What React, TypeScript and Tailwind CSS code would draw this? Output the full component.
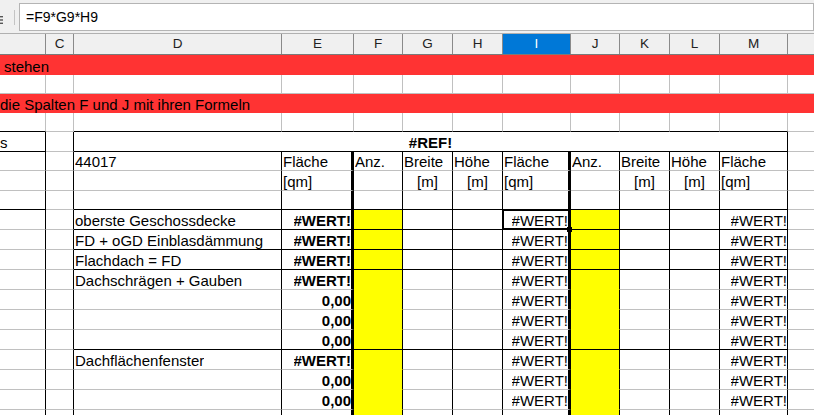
import React from "react";

type Line = "g" | "b" | "t" | "y" | "n";
type Cell = {
  t?: string;
  a?: "l" | "r" | "c";
  bold?: boolean;
  r?: Line;
  bt?: Line;
  yellow?: boolean;
  sel?: boolean;
};

// column widths B..N (B and N are cut by the window)
const W = [
  "w-[46px]",
  "w-[28px]",
  "w-[208px]",
  "w-[72px]",
  "w-[49px]",
  "w-[50px]",
  "w-[50px]",
  "w-[68px]",
  "w-[49px]",
  "w-[50px]",
  "w-[50px]",
  "w-[68px]",
  "w-[60px]",
];
const LETTERS = ["", "C", "D", "E", "F", "G", "H", "I", "J", "K", "L", "M", ""];

const RB: Record<Line, string> = {
  g: "border-r border-r-[#c0c0c0]",
  b: "border-r border-r-black",
  t: "border-r-[3px] border-r-black",
  y: "border-r border-r-[#ffff00]",
  n: "",
};
const BB: Record<Line, string> = {
  g: "border-b border-b-[#c0c0c0]",
  b: "border-b border-b-black",
  t: "border-b-2 border-b-black",
  y: "border-b border-b-[#ffff00]",
  n: "",
};
const AL = { l: "justify-start pl-[1px]", r: "justify-end", c: "justify-center" };

function Row({ h, cells }: { h: string; cells: Cell[] }) {
  return (
    <div className={`flex shrink-0 ${h}`}>
      {cells.map((c, i) => (
        <div
          key={i}
          className={`relative flex shrink-0 items-end h-full ${W[i]} ${RB[c.r ?? "g"]} ${BB[c.bt ?? "g"]} ${
            c.yellow ? "bg-[#ffff00]" : "bg-white"
          } ${AL[c.a ?? "l"]}`}
        >
          <span
            className={`overflow-hidden whitespace-nowrap leading-[16px] ${c.bold ? "font-bold" : ""}`}
          >
            {c.t}
          </span>
          {c.sel && (
            <>
              <div className="absolute left-[-1px] top-[-1px] w-[69px] h-[21px] border-2 border-black z-10" />
              <div className="absolute left-[64px] top-[17px] w-[5px] h-[5px] bg-black z-10" />
            </>
          )}
        </div>
      ))}
    </div>
  );
}

function plain(bottoms?: Partial<Record<number, Line>>): Cell[] {
  return W.map((_, i) => ({ bt: bottoms?.[i] ?? "g" }));
}

function tableRow(texts: Record<number, Cell>, bottom: Line, bBottom: Line = "g"): Cell[] {
  const rights: Line[] = ["b", "b", "b", "t", "b", "b", "b", "t", "b", "b", "b", "b", "g"];
  return W.map((_, i) => {
    const inBox = i >= 2 && i <= 11;
    return {
      r: rights[i],
      bt: i === 0 ? bBottom : inBox ? bottom : "g",
      ...texts[i],
    };
  });
}

const data: { d?: string; e?: string; bt: Line; sel?: boolean; last?: boolean }[] = [
  { d: "oberste Geschossdecke", e: "#WERT!", bt: "b", sel: true },
  { d: "FD + oGD Einblasdämmung", e: "#WERT!", bt: "b" },
  { d: "Flachdach = FD", e: "#WERT!", bt: "b" },
  { d: "Dachschrägen + Gauben", e: "#WERT!", bt: "g" },
  { e: "0,00", bt: "g" },
  { e: "0,00", bt: "g" },
  { e: "0,00", bt: "b" },
  { d: "Dachflächenfenster", e: "#WERT!", bt: "g" },
  { e: "0,00", bt: "g" },
  { e: "0,00", bt: "g" },
  { bt: "g", last: true },
];

export default function App() {
  const boxBottoms = { 0: "b", 2: "b", 3: "b", 4: "b", 5: "b", 6: "b", 7: "b", 8: "b", 9: "b", 10: "b", 11: "b" } as Partial<
    Record<number, Line>
  >;

  return (
    <div className="w-[814px] h-[415px] overflow-hidden bg-white text-[15px] text-black font-['Liberation_Sans',Arial,sans-serif] flex flex-col">
      {/* formula bar */}
      <div className="flex shrink-0 h-[33px] bg-[#f0f0f0] pt-[3px]">
        <div className="w-[14px] pt-[13px]">
          <svg width="4" height="8" viewBox="0 0 4 8">
            <rect x="0" y="0" width="3" height="1.4" fill="#555" />
            <rect x="0" y="3.3" width="3" height="1.4" fill="#555" />
            <rect x="0" y="6.6" width="3" height="1.4" fill="#555" />
          </svg>
        </div>
        <div className="w-px h-[15px] mt-[7px] bg-[#c4c4c4]" />
        <div className="ml-[4px] flex-1 h-[28px] border border-[#b4b4b4] bg-white flex items-center pl-[6px] text-[14px]">
          =F9*G9*H9
        </div>
      </div>

      {/* column header */}
      <div className="flex shrink-0 h-[22px] border-t border-t-[#b0b0b0] border-b border-b-[#7a7a7a] bg-[#f0f0f0]">
        {LETTERS.map((l, i) => (
          <div
            key={i}
            className={`shrink-0 h-full flex items-center justify-center text-[13.5px] ${W[i]} ${
              i < 12 ? "border-r border-r-[#8a8a8a]" : ""
            } ${l === "I" ? "bg-[#0078d7] text-white" : "text-[#222]"}`}
          >
            {l}
          </div>
        ))}
      </div>

      {/* row 1 */}
      <div className="flex shrink-0 h-[20px] bg-[#ff3333] items-end pl-[4px]">
        <span className="leading-[16px] whitespace-nowrap">stehen</span>
      </div>
      <Row h="h-[19px]" cells={plain()} />
      {/* row 3 */}
      <div className="flex shrink-0 h-[19px] bg-[#ff3333] items-end">
        <span className="leading-[16px] whitespace-nowrap">die Spalten F und J mit ihren Formeln</span>
      </div>
      <Row h="h-[19px]" cells={plain(boxBottoms)} />

      {/* row 5: merged title */}
      <div className="flex shrink-0 h-[20px]">
        <div className={`flex items-end h-full shrink-0 ${W[0]} border-r border-r-black border-b border-b-black`}>
          <span className="leading-[16px]">s</span>
        </div>
        <div className={`h-full shrink-0 ${W[1]} border-r border-r-black border-b border-b-[#c0c0c0]`} />
        <div className="flex items-end justify-center h-full shrink-0 w-[714px] border-r border-r-black border-b border-b-black">
          <span className="leading-[16px] font-bold">#REF!</span>
        </div>
        <div className={`h-full shrink-0 ${W[12]} border-b border-b-[#c0c0c0]`} />
      </div>

      <Row
        h="h-[19px]"
        cells={tableRow(
          {
            2: { t: "44017" },
            3: { t: "Fläche" },
            4: { t: "Anz." },
            5: { t: "Breite" },
            6: { t: "Höhe" },
            7: { t: "Fläche" },
            8: { t: "Anz." },
            9: { t: "Breite" },
            10: { t: "Höhe" },
            11: { t: "Fläche" },
          },
          "g"
        )}
      />
      <Row
        h="h-[20px]"
        cells={tableRow(
          {
            3: { t: "[qm]" },
            5: { t: "[m]", a: "c" },
            6: { t: "[m]", a: "c" },
            7: { t: "[qm]" },
            9: { t: "[m]", a: "c" },
            10: { t: "[m]", a: "c" },
            11: { t: "[qm]" },
          },
          "g"
        )}
      />
      <Row h="h-[19px]" cells={tableRow({}, "b", "b")} />

      {data.map((row, k) => (
        <Row
          key={k}
          h="h-[20px]"
          cells={tableRow(
            {
              2: { t: row.d },
              3: { t: row.e, a: "r", bold: true },
              4: { yellow: true, bt: row.bt === "b" ? "b" : "y" },
              7: { t: row.last ? undefined : "#WERT!", a: "r", sel: row.sel },
              8: { yellow: true, bt: row.bt === "b" ? "b" : "y" },
              11: { t: row.last ? undefined : "#WERT!", a: "r" },
            },
            row.bt
          )}
        />
      ))}
    </div>
  );
}
